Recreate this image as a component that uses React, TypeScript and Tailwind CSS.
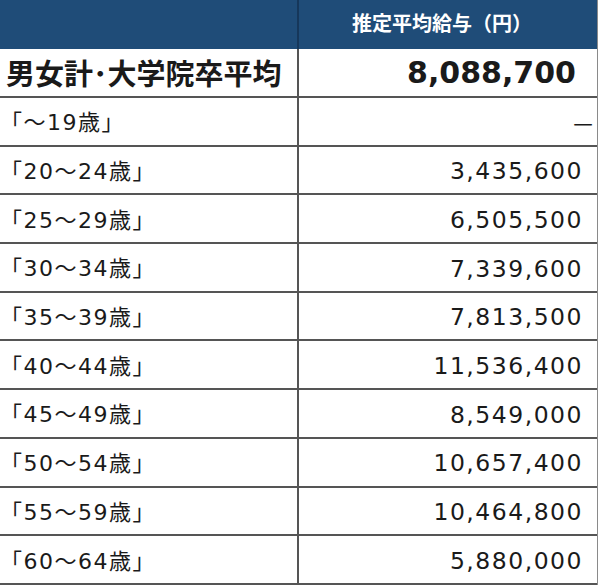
import React from "react";

const rows: [string, string][] = [
  ["「～19歳」", "—"],
  ["「20～24歳」", "3,435,600"],
  ["「25～29歳」", "6,505,500"],
  ["「30～34歳」", "7,339,600"],
  ["「35～39歳」", "7,813,500"],
  ["「40～44歳」", "11,536,400"],
  ["「45～49歳」", "8,549,000"],
  ["「50～54歳」", "10,657,400"],
  ["「55～59歳」", "10,464,800"],
  ["「60～64歳」", "5,880,000"],
];

export default function App() {
  return (
    <div className="w-[600px] h-[587px] bg-white font-['DejaVu_Sans','Noto_Sans_CJK_JP',sans-serif] text-[#1a1a1a]">
      <div className="w-[598px] border-r border-[#8a8a8a]">
        <div className="grid grid-cols-[299px_1fr] h-[49px] bg-[#1f4c78]">
          <div className="border-r-2 border-[#16375a]" />
          <div className="flex items-center justify-center text-white text-[20px] font-['Noto_Sans_CJK_JP',sans-serif] font-semibold pb-[4px] pr-[12px]">
            推定平均給与（円）
          </div>
        </div>
        <div className="grid grid-cols-[299px_1fr] h-[49px] border-b-2 border-[#555]">
          <div className="border-r-2 border-[#555] flex items-center pl-[6px] text-[29px] font-['Noto_Sans_CJK_JP',sans-serif] font-bold leading-none">
            男女計･大学院卒平均
          </div>
          <div className="flex items-center justify-end pr-[21px] text-[30px] font-bold leading-none">
            8,088,700
          </div>
        </div>
        {rows.map(([label, value]) => (
          <div
            key={label}
            className="grid grid-cols-[299px_1fr] h-[48.7px] border-b-2 border-[#555]"
          >
            <div className="border-r-2 border-[#555] flex items-center pl-[0px] pt-[4px] text-[22px] leading-none tracking-[1.5px]">
              {label}
            </div>
            {value === "—" ? (
              <div className="flex items-center justify-end pr-[4px] text-[22px] font-['Noto_Sans_CJK_JP',sans-serif] leading-none">
                —
              </div>
            ) : (
              <div className="flex items-center justify-end pr-[14px] pt-[4px] text-[23.5px] leading-none tracking-[1.5px]">
                {value}
              </div>
            )}
          </div>
        ))}
      </div>
    </div>
  );
}
